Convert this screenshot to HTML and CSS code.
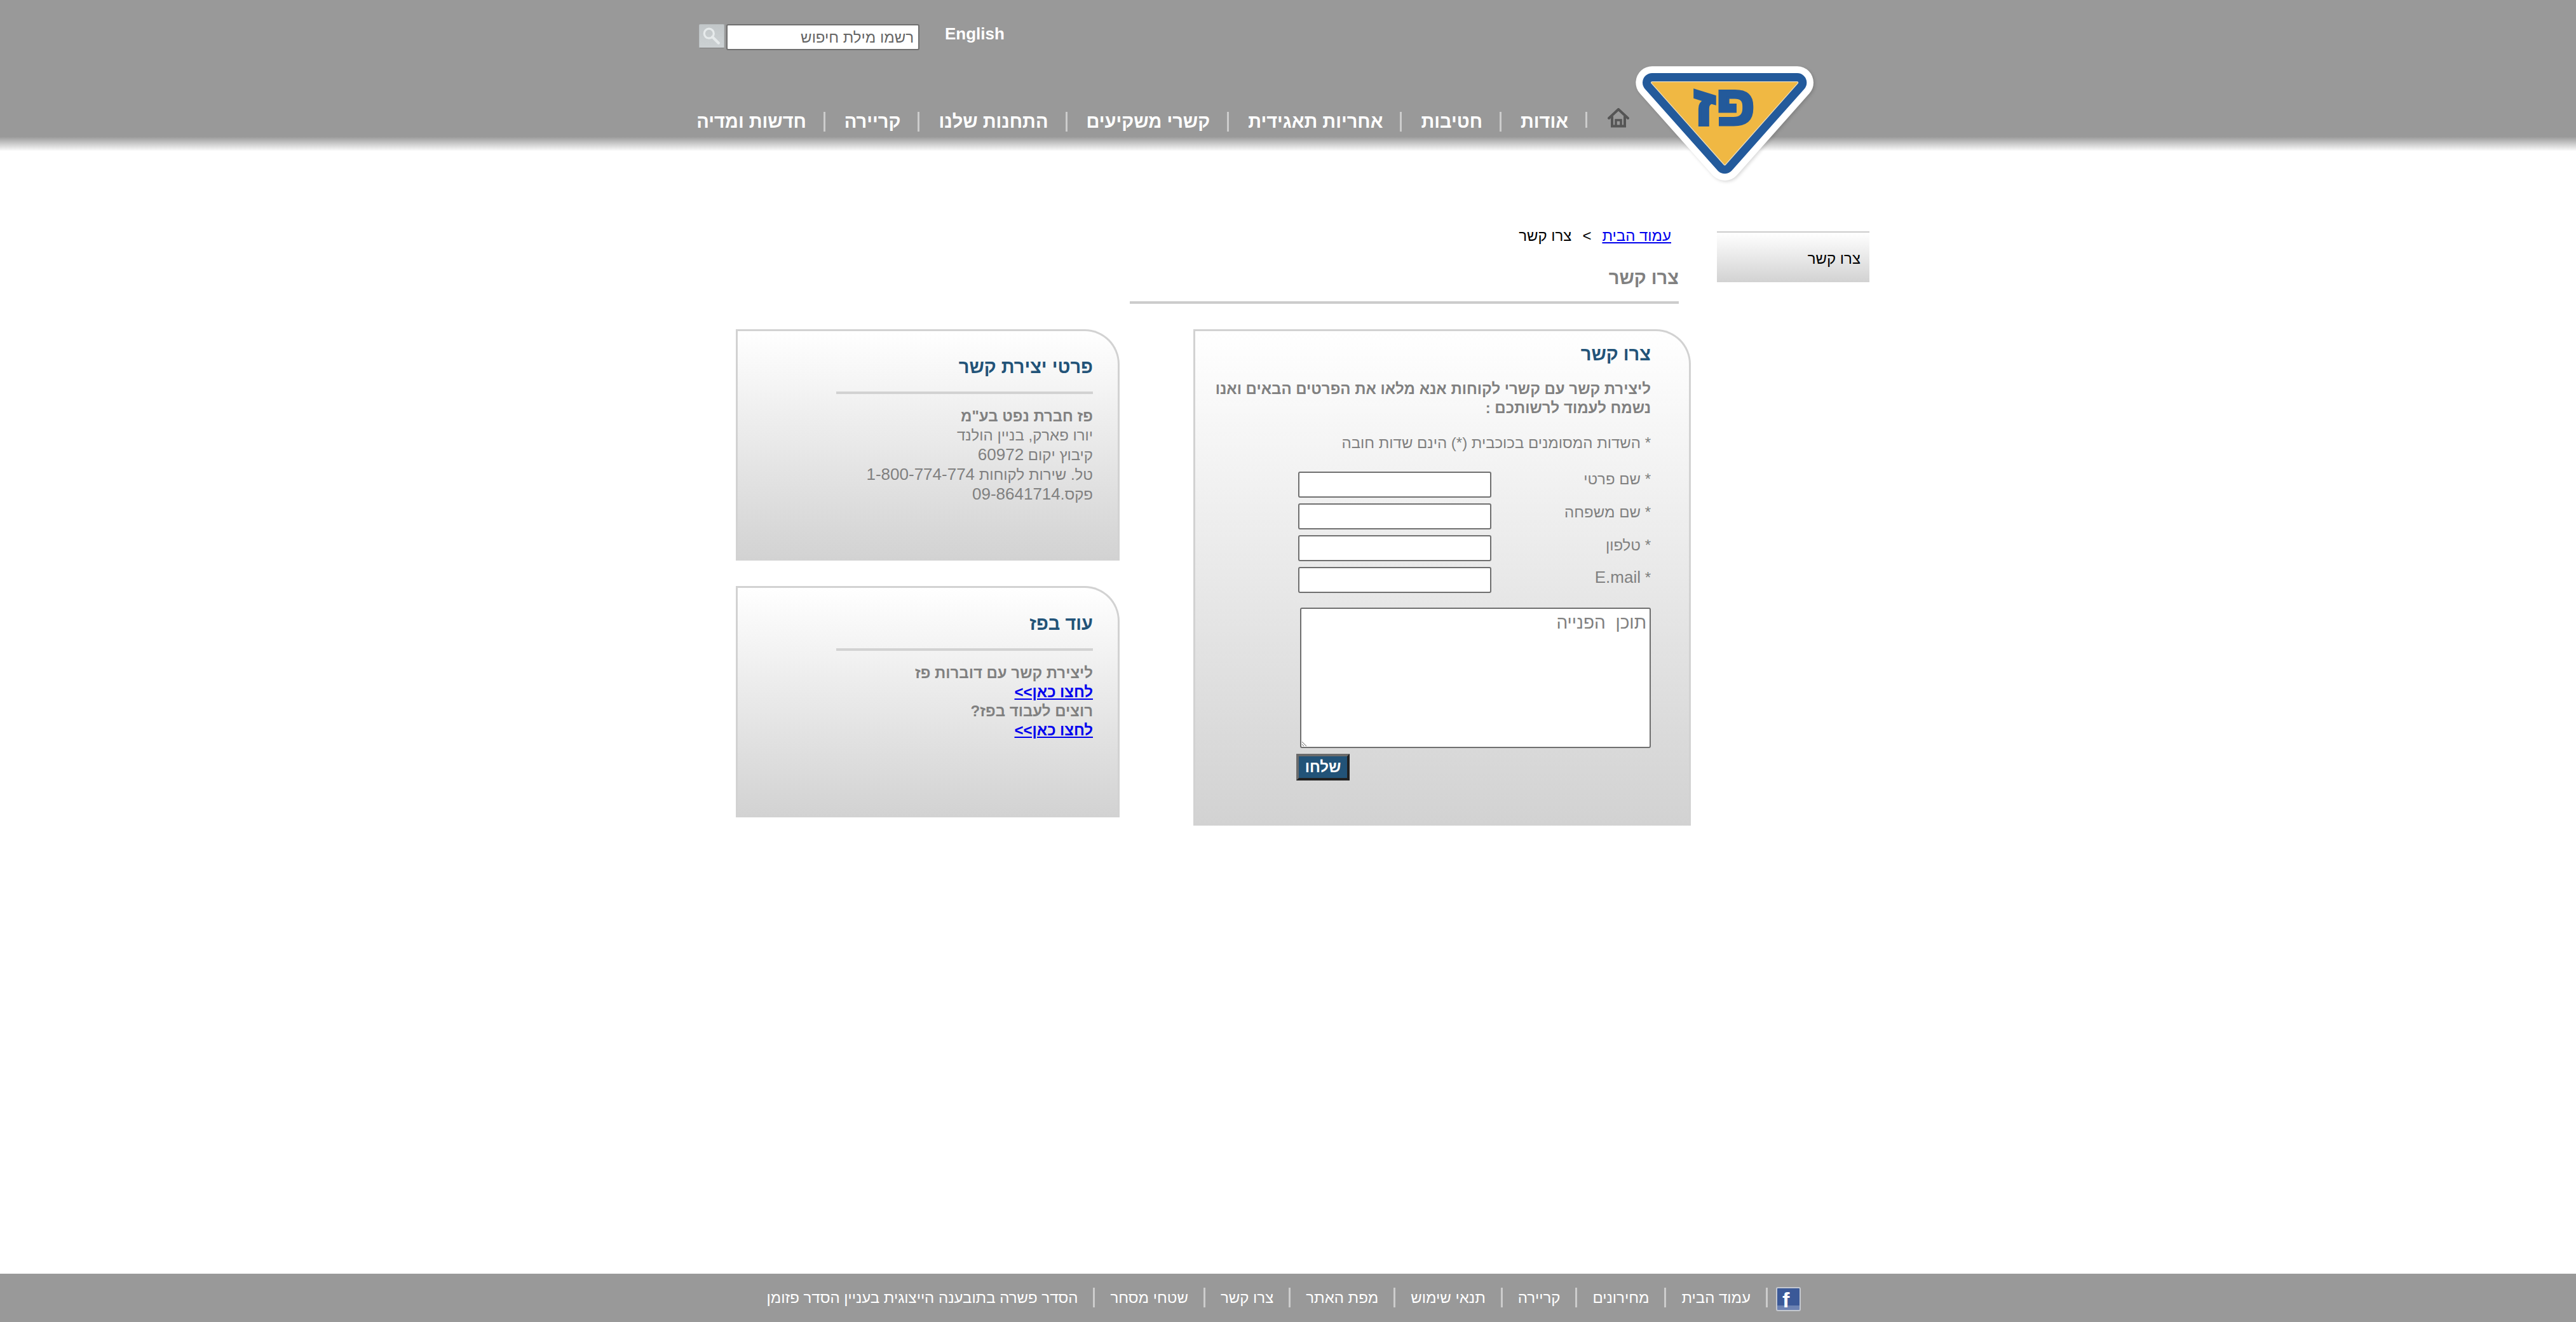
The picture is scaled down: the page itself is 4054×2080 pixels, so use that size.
FILE: index.html
```html
<!DOCTYPE html>
<html lang="he" dir="rtl">
<head>
  <meta charset="utf-8">
  <title>צרו קשר</title>
  <link rel="stylesheet" href="styles.css">
</head>
<body>
  <header class="site-header">
    <div class="wrap">
      <div class="top-row">
        <button class="search-btn" aria-label="חיפוש">
          <svg width="30" height="30" viewBox="0 0 28 28"><circle cx="11" cy="10" r="7" fill="none" stroke="#e6eaeb" stroke-width="3"/><path d="M16 15l9 9" stroke="#e6eaeb" stroke-width="4" stroke-linecap="round"/></svg>
        </button>
        <input class="search-input" type="text" dir="rtl" placeholder="רשמו מילת חיפוש">
        <a class="lang-link" href="#">English</a>
      </div>
      <nav class="main-nav">
        <a class="nav-home" href="#" aria-label="עמוד הבית">
          <svg width="34" height="31" viewBox="0 0 34 31"><path d="M2 16L17 2l15 14" fill="none" stroke="#555" stroke-width="4" stroke-linejoin="round" stroke-linecap="round"/><path d="M7 13v15.500h20V13" fill="none" stroke="#555" stroke-width="4"/><path d="M13 28v-9h8v9" fill="none" stroke="#555" stroke-width="3.500"/></svg>
        </a>
        <a href="#">אודות</a>
        <a href="#">חטיבות</a>
        <a href="#">אחריות תאגידית</a>
        <a href="#">קשרי משקיעים</a>
        <a href="#">התחנות שלנו</a>
        <a href="#">קריירה</a>
        <a href="#">חדשות ומדיה</a>
      </nav>
      <svg class="logo" width="350" height="210" viewBox="0 0 1050 630">
        <g class="logo-shape">
          <polygon points="240,120 925,120 583,505" fill="#fff" stroke="#fff" stroke-width="154" stroke-linejoin="round"/>
          <polygon points="240,120 925,120 583,505" fill="#235a9b" stroke="#235a9b" stroke-width="90" stroke-linejoin="round"/>
          <polygon points="240,120 925,120 583,505" fill="#f0b843" stroke="#e9dcbc" stroke-width="12" stroke-linejoin="round"/>
          <polygon points="240,120 925,120 583,505" fill="#f0b843" stroke="#f0b843" stroke-width="4" stroke-linejoin="round"/>
        </g>
        <text class="logo-text" x="581" y="320" text-anchor="middle" textLength="292" lengthAdjust="spacingAndGlyphs">פז</text>
      </svg>
    </div>
  </header>

  <main class="wrap page-body">
    <aside class="side-menu">
      <a href="#">צרו קשר</a>
    </aside>

    <div class="content">
      <div class="breadcrumb"><a href="#">עמוד הבית</a><span class="crumb-sep">&gt;</span><span>צרו קשר</span></div>
      <h1 class="page-title">צרו קשר</h1>

      <div class="cards">
        <form class="card form-card">
          <h2 class="card-title">צרו קשר</h2>
          <p class="form-intro">ליצירת קשר עם קשרי לקוחות אנא מלאו את הפרטים הבאים ואנו נשמח לעמוד לרשותכם :</p>
          <p class="form-note">* השדות המסומנים בכוכבית (*) הינם שדות חובה</p>

          <div class="form-row"><label>* שם פרטי</label><input type="text"></div>
          <div class="form-row row-low"><label>* שם משפחה</label><input type="text"></div>
          <div class="form-row row-lower"><label>* טלפון</label><input type="text"></div>
          <div class="form-row row-lower"><label>* <span class="latin">E.mail</span></label><input type="text"></div>

          <textarea class="message">תוכן  הפנייה</textarea>
          <button class="send-btn" type="button">שלחו</button>
        </form>

        <div class="side-cards">
          <div class="card info-card">
            <h2 class="card-title info-title">פרטי יצירת קשר</h2>
            <div class="info-text">
              <strong>פז חברת נפט בע"מ</strong><br>
              יורו פארק, בניין הולנד<br>
              קיבוץ יקום <span class="latin">60972</span><br>
              טל. שירות לקוחות <span class="latin">1-800-774-774</span><br>
              פקס.<span class="latin">09-8641714</span>
            </div>
          </div>
          <div class="card info-card">
            <h2 class="card-title info-title">עוד בפז</h2>
            <div class="info-text info-bold">
              ליצירת קשר עם דוברות פז<br>
              <a href="#">לחצו כאן&gt;&gt;</a><br>
              רוצים לעבוד בפז?<br>
              <a href="#">לחצו כאן&gt;&gt;</a>
            </div>
          </div>
        </div>
      </div>
    </div>
  </main>

  <footer class="site-footer">
    <div class="wrap footer-inner">
      <a class="fb-icon" href="#" aria-label="Facebook">f</a>
      <nav class="footer-nav">
        <a href="#">עמוד הבית</a>
        <a href="#">מחירונים</a>
        <a href="#">קריירה</a>
        <a href="#">תנאי שימוש</a>
        <a href="#">מפת האתר</a>
        <a href="#">צרו קשר</a>
        <a href="#">שטחי מסחר</a>
        <a href="#">הסדר פשרה בתובענה הייצוגית בעניין הסדר פזומן</a>
      </nav>
    </div>
  </footer>
</body>
</html>
```

FILE: styles.css
```css
body {
  margin: 0;
  display: flex;
  flex-direction: column;
  min-height: 100vh;
  font-family: "Liberation Sans", Arial, sans-serif;
  font-size: 24px;
  line-height: 30px;
  color: #808080;
  background: #fff;
}
.wrap {
  width: 1858px;
  margin: 0 auto;
  position: relative;
}
.latin {
  font-size: 26px;
}

/* header */
.site-header {
  height: 238px;
  background: linear-gradient(#999 0, #999 215px, #fff 238px);
}
.top-row {
  display: flex;
  direction: ltr;
  align-items: flex-start;
  padding: 38px 0 0 2px;
}
.search-btn {
  width: 40px;
  height: 38px;
  padding: 0 0 0 3px;
  border: 1px solid #b9bfc1;
  border-bottom-color: #7d7d7d;
  border-radius: 2px;
  background: linear-gradient(#c2c7c9, #ccd1d3);
}
.search-btn svg {
  display: block;
}
.search-input {
  width: 304px;
  height: 41px;
  box-sizing: border-box;
  margin-left: 3px;
  padding: 0 7px;
  border: 2px solid #6f6f6f;
  border-radius: 3px;
  background: #fff;
  font: 24px "Liberation Sans", Arial, sans-serif;
}
.search-input::placeholder {
  color: #666;
  opacity: 1;
}
.lang-link {
  margin-left: 40px;
  color: #fff;
  font-size: 26px;
  font-weight: bold;
  text-decoration: none;
}
.main-nav {
  display: flex;
  align-items: flex-start;
  margin: 97px 392px 0 0;
}
.main-nav a {
  padding: 0 27px 0 30px;
  border-left: 3px solid #ccc;
  color: #fff;
  font-size: 29px;
  font-weight: bold;
  line-height: 31px;
  white-space: nowrap;
  text-decoration: none;
}
.main-nav a:last-child {
  border-left: 0;
}
.main-nav .nav-home {
  padding: 0 0 0 32px;
}
.nav-home svg {
  display: block;
  margin-top: -6px;
}
.logo {
  position: absolute;
  top: 90px;
  right: 86px;
}
.logo-shape {
  filter: drop-shadow(6px 6px 8px rgba(0, 0, 0, .15));
}
.logo-text {
  font-family: "Liberation Sans", Arial, sans-serif;
  font-size: 265px;
  font-weight: bold;
  fill: #235a9b;
  stroke: #235a9b;
  stroke-width: 12px;
  stroke-linejoin: miter;
}

/* main */
.page-body {
  flex: 1;
  display: flex;
  align-items: flex-start;
}
.side-menu {
  width: 240px;
  height: 78px;
  margin: 126px 14px 0 0;
  border-top: 2px solid #ccc;
  background: linear-gradient(#fff, #d2d2d2);
}
.side-menu a {
  display: block;
  padding: 26px 14px 0 0;
  color: #000;
  text-decoration: none;
}
.content {
  width: 1503px;
  margin: 118px 41px 0 0;
}
.breadcrumb {
  margin-right: 31px;
  color: #000;
}
.breadcrumb a {
  color: #00e;
}
.crumb-sep {
  margin: 0 17px;
}
.page-title {
  width: 864px;
  box-sizing: border-box;
  margin: 33px 19px 0 0;
  padding-bottom: 19px;
  border-bottom: 4px solid #ccc;
  font-size: 29px;
  line-height: 36px;
}
.cards {
  display: flex;
  align-items: flex-start;
  gap: 116px;
  margin-top: 40px;
}
.card {
  box-sizing: border-box;
  border: 3px solid #d2d2d2;
  border-bottom: 0;
  border-top-right-radius: 55px;
  background: linear-gradient(#fff, #d2d2d2);
}
.card-title {
  margin: 0;
  color: #225378;
  font-size: 29px;
  line-height: 36px;
}

/* form card */
.form-card {
  width: 783px;
  padding: 18px 60px 71px 18px;
}
.form-intro {
  margin: 22px 0 0;
  font-weight: bold;
}
.form-note {
  margin: 25px 0 30px;
}
.form-row {
  display: flex;
  height: 50px;
}
.form-row label {
  width: 251px;
  flex: none;
  line-height: 24px;
}
.row-low label {
  padding-top: 2px;
}
.row-lower label {
  padding-top: 4px;
}
.form-row input {
  width: 304px;
  height: 41px;
  box-sizing: border-box;
  border: 2px solid #6f6f6f;
  border-radius: 3px;
  background: #fff;
}
.message {
  display: block;
  width: 552px;
  height: 221px;
  box-sizing: border-box;
  margin: 14px 0 0;
  padding: 6px 5px;
  border: 2px solid #6f6f6f;
  border-radius: 3px;
  background: #fff;
  color: #808080;
  font-family: "Liberation Sans", Arial, sans-serif;
  font-size: 28px;
  line-height: 32px;
}
.send-btn {
  display: block;
  width: 84px;
  height: 42px;
  margin: 9px 474px 0 0;
  padding: 0;
  border: 4px solid;
  border-color: #6b6b6b #222 #222 #6b6b6b;
  background: #225378;
  color: #fff;
  font: bold 24px "Liberation Sans", Arial, sans-serif;
}

/* info cards */
.side-cards {
  width: 604px;
}
.info-card {
  height: 364px;
  padding: 38px 39px 0 0;
}
.info-card + .info-card {
  margin-top: 40px;
}
.info-title {
  width: 404px;
  padding-bottom: 21px;
  border-bottom: 4px solid #d2d2d2;
}
.info-text {
  margin-top: 20px;
}
.info-bold {
  font-weight: bold;
}
.info-text a {
  color: #00e;
}

/* footer */
.site-footer {
  height: 76px;
  background: #999;
}
.footer-inner {
  display: flex;
  align-items: flex-start;
  padding-top: 21px;
}
.fb-icon {
  box-sizing: border-box;
  width: 39px;
  height: 38px;
  margin-right: 122px;
  padding-left: 8px;
  border: 2px solid #c4c8d0;
  border-radius: 3px;
  background: linear-gradient(#3b5998 0, #3b5998 78%, #6d83b3 80%, #6d83b3 100%);
  color: #fff;
  font-size: 34px;
  font-weight: bold;
  line-height: 37px;
  text-align: left;
  text-decoration: none;
}
.footer-nav {
  display: flex;
  margin: 1px 13px 0 0;
}
.footer-nav a {
  padding: 0 24px;
  border-right: 3px solid #ccc;
  color: #fff;
  line-height: 31px;
  white-space: nowrap;
  text-decoration: none;
}
```
